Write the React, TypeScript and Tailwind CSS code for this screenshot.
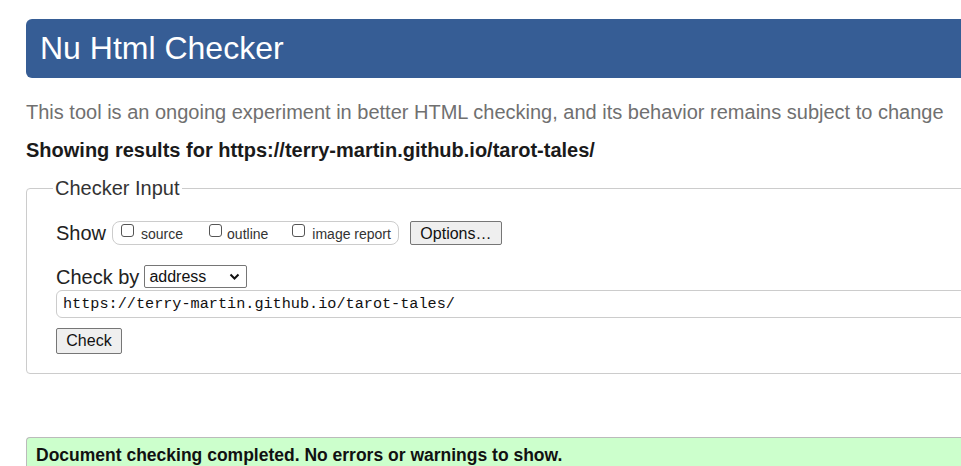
export default function App() {
  return (
    <div className="w-[961px] h-[466px] overflow-hidden bg-white font-['Liberation_Sans',Arial,sans-serif] text-[#222]">
      <div className="w-[1200px] pl-[26px] pt-[19px]">
        <h1 className="h-[59px] bg-[#365d95] rounded-l-[6px] text-white text-[32px] leading-[59px] pl-[14px]">
          Nu Html Checker
        </h1>
        <p className="mt-[22px] text-[20px] leading-[24px] text-[#707070]">
          This tool is an ongoing experiment in better HTML checking, and its behavior remains subject to change
        </p>
        <p className="mt-[14px] text-[20px] leading-[24px] font-bold text-[#1a1a1a]">
          Showing results for https://terry-martin.github.io/tarot-tales/
        </p>
        <fieldset className="mt-[14px] border border-[#ccc] rounded-[4px] h-[198px] px-[29px]">
          <legend className="ml-[-3px] px-[2px] text-[20px] leading-[24px] text-[#333]">Checker Input</legend>
          <div className="flex items-center mt-[21px] h-[24px]">
            <span className="text-[20px] text-[#222] mr-[6px]">Show</span>
            <div className="flex items-center h-[24px] border border-[#ccc] rounded-[8px] pl-[8px] pr-[7px] text-[14px] text-[#333]">
              <label className="flex items-center gap-[7px] mr-[26px]">
                <span className="w-[13px] h-[13px] border border-[#555] rounded-[3px] -mt-[5px]" />
                <span className="mt-[2px]">source</span>
              </label>
              <label className="flex items-center gap-[5px] mr-[24px]">
                <span className="w-[13px] h-[13px] border border-[#555] rounded-[3px] -mt-[5px]" />
                <span className="mt-[2px]">outline</span>
              </label>
              <label className="flex items-center gap-[7px]">
                <span className="w-[13px] h-[13px] border border-[#555] rounded-[3px] -mt-[5px]" />
                <span className="mt-[2px]">image report</span>
              </label>
            </div>
            <button className="ml-[11px] h-[24px] w-[92px] border border-[#767676] rounded-[2px] bg-[#efefef] text-[16px] text-[#111]">
              Options…
            </button>
          </div>
          <div className="flex items-center mt-[20px] h-[23px]">
            <span className="text-[20px] text-[#222] mr-[5px]">Check by</span>
            <div className="flex items-center justify-between w-[103px] h-[23px] border border-[#767676] rounded-[2px] pl-[4px] pr-[6px] text-[16px] text-[#111]">
              address
              <svg width="11" height="8" viewBox="0 0 11 8" fill="none" stroke="#111" strokeWidth="2">
                <path d="M1.5 1.5 L5.5 5.5 L9.5 1.5" />
              </svg>
            </div>
          </div>
          <div className="mt-[2px] h-[28px] border border-[#ccc] rounded-[6px] flex items-center pl-[6px] font-['Liberation_Mono',monospace] text-[15.2px] text-[#111]">
            https://terry-martin.github.io/tarot-tales/
          </div>
          <button className="mt-[10px] h-[26px] w-[66px] border border-[#767676] rounded-[2px] bg-[#efefef] text-[16px] text-[#111]">
            Check
          </button>
        </fieldset>
        <div className="mt-[63px] h-[40px] bg-[#ccffcc] border-t border-l border-[#bbb] rounded-tl-[4px] pl-[9px] pt-[6px] text-[17.5px] leading-[22px] font-bold text-[#111]">
          Document checking completed. No errors or warnings to show.
        </div>
      </div>
    </div>
  );
}
